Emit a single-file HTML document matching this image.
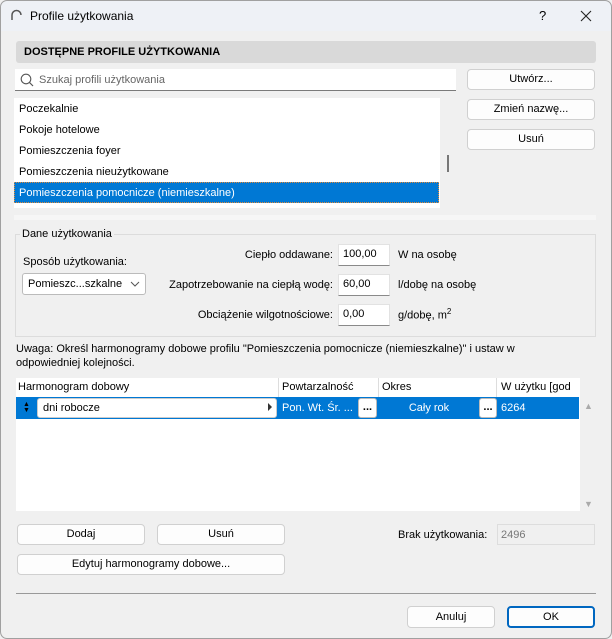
<!DOCTYPE html>
<html><head><meta charset="utf-8"><style>
*{box-sizing:border-box;margin:0;padding:0}
body{width:612px;height:639px;overflow:hidden;background:#f0f0f0;font-family:"Liberation Sans",sans-serif;font-size:11px;color:#000;position:relative}
.a{position:absolute}
.btn{position:absolute;background:#fdfdfd;border:1px solid #d0d0d0;border-radius:4px;text-align:center;line-height:19px;font-size:11px}
.in{position:absolute;background:#fff;border:1px solid #e2e2e2;border-bottom:1px solid #8a8a8a;padding-left:4px;line-height:19px}
.lab{position:absolute;text-align:right;width:320px;left:13px}
.blue{background:#0078d4;color:#fff}
</style></head><body>
<div class="a" style="left:0;top:0;width:612px;height:639px;border:1px solid #a0a0a0;border-radius:7px;pointer-events:none;z-index:5"></div>
<div class="a" style="left:0;top:0;width:612px;height:31px;background:#eef1f6;border-radius:7px 7px 0 0"></div>
<svg class="a" style="left:10px;top:9px" width="12" height="12"><path d="M2 11 V6 A4.5 4.5 0 0 1 11 6" fill="none" stroke="#555" stroke-width="1.5"/></svg>
<div class="a" style="left:30px;top:9px;font-size:12px">Profile użytkowania</div>
<div class="a" style="left:539px;top:8px;font-size:13px">?</div>
<svg class="a" style="left:580px;top:10px" width="12" height="12"><path d="M1 1L11 11M11 1L1 11" stroke="#222" stroke-width="1.1"/></svg>

<div class="a" style="left:16px;top:41px;width:580px;height:22px;background:#d9d9d9;border-radius:3px;font-weight:bold;padding:5px 0 0 8px;font-size:11px">DOSTĘPNE PROFILE UŻYTKOWANIA</div>

<div class="a" style="left:15px;top:69px;width:441px;height:22px;background:#fff;border-bottom:1px solid #7a7a7a"></div>
<svg class="a" style="left:20px;top:73px" width="14" height="14"><circle cx="6" cy="6" r="4.8" fill="none" stroke="#555" stroke-width="1.1"/><path d="M9.5 9.5L13 13" stroke="#555" stroke-width="1.2"/></svg>
<div class="a" style="left:39px;top:74px;color:#666">Szukaj profili użytkowania</div>
<div class="btn" style="left:467px;top:69px;width:128px;height:21px">Utwórz...</div>
<div class="btn" style="left:467px;top:99px;width:128px;height:21px">Zmień nazwę...</div>
<div class="btn" style="left:467px;top:129px;width:128px;height:21px">Usuń</div>

<div class="a" style="left:14px;top:98px;width:426px;height:110px;background:#fff"></div>
<div class="a" style="left:19px;top:103px">Poczekalnie</div>
<div class="a" style="left:19px;top:124px">Pokoje hotelowe</div>
<div class="a" style="left:19px;top:145px">Pomieszczenia foyer</div>
<div class="a" style="left:19px;top:166px">Pomieszczenia nieużytkowane</div>
<div class="a blue" style="left:14px;top:182px;width:425px;height:21px;padding:4px 0 0 4px;border:1px dotted #e08a3a">Pomieszczenia pomocnicze (niemieszkalne)</div>
<div class="a" style="left:447px;top:155px;width:2px;height:17px;background:#777"></div>
<div class="a" style="left:14px;top:215px;width:582px;height:5px;background:#f6f6f6"></div>

<div class="a" style="left:15px;top:234px;width:581px;height:103px;border:1px solid #dcdcdc"></div>
<div class="a" style="left:20px;top:228px;background:#f0f0f0;padding:0 2px">Dane użytkowania</div>
<div class="a" style="left:23px;top:256px">Sposób użytkowania:</div>
<div class="a" style="left:22px;top:273px;width:124px;height:22px;background:#fff;border:1px solid #bbb;border-radius:3px;padding:4px 0 0 5px">Pomieszc...szkalne</div>
<svg class="a" style="left:130px;top:281px" width="10" height="6"><path d="M1 1L5 5L9 1" fill="none" stroke="#555"/></svg>
<div class="lab" style="top:249px">Ciepło oddawane:</div>
<div class="lab" style="top:279px">Zapotrzebowanie na ciepłą wodę:</div>
<div class="lab" style="top:309px">Obciążenie wilgotnościowe:</div>
<div class="in" style="left:338px;top:244px;width:52px;height:22px">100,00</div>
<div class="in" style="left:338px;top:274px;width:52px;height:22px">60,00</div>
<div class="in" style="left:338px;top:304px;width:52px;height:22px">0,00</div>
<div class="a" style="left:398px;top:249px">W na osobę</div>
<div class="a" style="left:398px;top:279px">l/dobę na osobę</div>
<div class="a" style="left:398px;top:307px">g/dobę, m<sup style="font-size:8px">2</sup></div>

<div class="a" style="left:16px;top:342px;line-height:14px">Uwaga: Określ harmonogramy dobowe profilu "Pomieszczenia pomocnicze (niemieszkalne)" i ustaw w<br>odpowiedniej kolejności.</div>

<div class="a" style="left:16px;top:378px;width:564px;height:133px;background:#fff"></div>
<div class="a" style="left:18px;top:381px">Harmonogram dobowy</div>
<div class="a" style="left:278px;top:378px;width:1px;height:19px;background:#ddd"></div>
<div class="a" style="left:282px;top:381px">Powtarzalność</div>
<div class="a" style="left:378px;top:378px;width:1px;height:19px;background:#ddd"></div>
<div class="a" style="left:382px;top:381px">Okres</div>
<div class="a" style="left:496px;top:378px;width:1px;height:19px;background:#ddd"></div>
<div class="a" style="left:501px;top:381px">W użytku [god</div>
<div class="a blue" style="left:16px;top:397px;width:563px;height:22px"></div>
<div class="a" style="left:23px;top:402px;color:#000;font-size:7px;line-height:6px">▲<br>▼</div>
<div class="a" style="left:37px;top:398px;width:240px;height:20px;background:#fff;border:1px solid #ccc;border-radius:3px;padding:3px 0 0 5px">dni robocze</div>
<div class="a" style="left:268px;top:403px;width:0;height:0;border-left:4px solid #333;border-top:4px solid transparent;border-bottom:4px solid transparent"></div>
<div class="a" style="left:282px;top:402px;color:#fff">Pon. Wt. Śr. ...</div>
<div class="a" style="left:358px;top:398px;width:19px;height:20px;background:#fff;border:1px solid #bbb;border-radius:3px;text-align:center;line-height:17px;font-weight:bold">...</div>
<div class="a" style="left:380px;top:402px;width:98px;text-align:center;color:#fff">Cały rok</div>
<div class="a" style="left:479px;top:398px;width:18px;height:20px;background:#fff;border:1px solid #bbb;border-radius:3px;text-align:center;line-height:17px;font-weight:bold">...</div>
<div class="a" style="left:501px;top:402px;color:#fff">6264</div>
<div class="a" style="left:584px;top:401px;color:#aaa;font-size:9px">▲</div>
<div class="a" style="left:584px;top:499px;color:#aaa;font-size:9px">▼</div>

<div class="btn" style="left:17px;top:524px;width:128px;height:21px">Dodaj</div>
<div class="btn" style="left:157px;top:524px;width:128px;height:21px">Usuń</div>
<div class="btn" style="left:17px;top:554px;width:268px;height:21px">Edytuj harmonogramy dobowe...</div>
<div class="a" style="left:398px;top:529px">Brak użytkowania:</div>
<div class="a" style="left:497px;top:524px;width:98px;height:21px;border:1px solid #ddd;background:#f0f0f0;color:#777;padding:4px 0 0 3px">2496</div>

<div class="a" style="left:16px;top:593px;width:580px;height:1px;background:#999"></div>
<div class="btn" style="left:407px;top:606px;width:88px;height:22px;line-height:20px">Anuluj</div>
<div class="btn" style="left:507px;top:606px;width:88px;height:22px;line-height:18px;border:2px solid #0067c0">OK</div>
</body></html>
